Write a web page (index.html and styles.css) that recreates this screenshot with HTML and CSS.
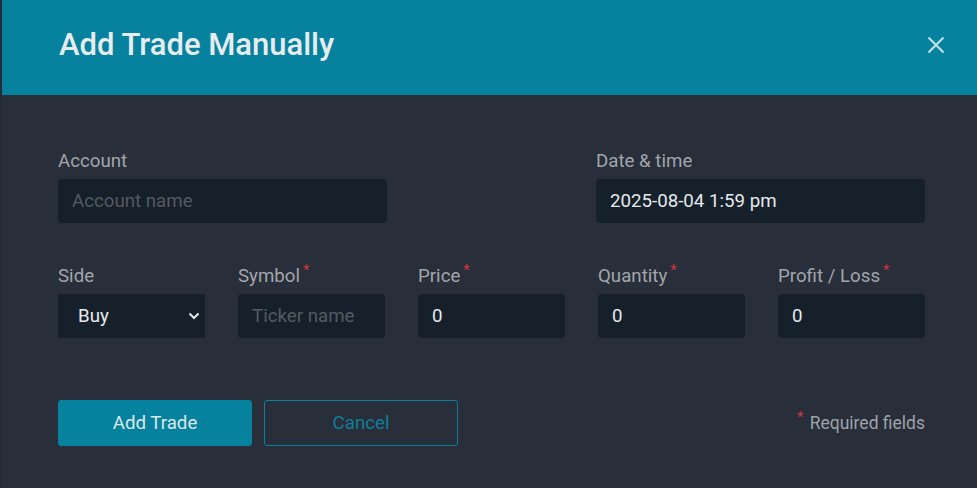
FILE: index.html
```html
<!DOCTYPE html>
<html lang="en">
<head>
<meta charset="utf-8"/>
<meta content="width=device-width, initial-scale=1.0" name="viewport"/>
<title>Add Trade Manually</title>
<link rel="stylesheet" href="styles.css">
</head>
<body>
<div class="modal">
  <div class="modal-header">
    <h2>Add Trade Manually</h2>
    <button class="close-btn" aria-label="Close">
      <svg width="18" height="18" viewBox="0 0 18 18"><path d="M1.5 1.5 L16.5 16.5 M16.5 1.5 L1.5 16.5" stroke="currentColor" stroke-width="2.2" fill="none"/></svg>
    </button>
  </div>
  <div class="modal-body">
    <div class="row row-top">
      <div class="field wide">
        <label>Account</label>
        <input type="text" placeholder="Account name"/>
      </div>
      <div class="field wide">
        <label>Date &amp; time</label>
        <input type="text" value="2025-08-04 1:59 pm"/>
      </div>
    </div>
    <div class="row row-five">
      <div class="field">
        <label>Side</label>
        <div class="select">
          <span>Buy</span>
          <svg width="12" height="8" viewBox="0 0 12 8"><path d="M1.5 1.5 L6 6 L10.5 1.5" stroke="currentColor" stroke-width="2" fill="none"/></svg>
        </div>
      </div>
      <div class="field">
        <label>Symbol<sup>*</sup></label>
        <input type="text" placeholder="Ticker name"/>
      </div>
      <div class="field">
        <label>Price<sup>*</sup></label>
        <input type="text" value="0"/>
      </div>
      <div class="field">
        <label>Quantity<sup>*</sup></label>
        <input type="text" value="0"/>
      </div>
      <div class="field">
        <label>Profit / Loss<sup>*</sup></label>
        <input type="text" value="0"/>
      </div>
    </div>
    <div class="actions">
      <button class="btn btn-primary">Add Trade</button>
      <button class="btn btn-outline">Cancel</button>
      <span class="required-note"><sup>*</sup> Required fields</span>
    </div>
  </div>
</div>
</body>
</html>
```

FILE: styles.css
```css
body {
  margin: 0;
  background: #282e3a;
  font-family: Roboto, "Liberation Sans", Arial, sans-serif;
  color: #e8eaed;
}
.modal {
  border-left: 2px solid #262c37;
  min-height: 488px;
  box-sizing: border-box;
}
.modal-header {
  background: #06829f;
  height: 95px;
  box-sizing: border-box;
  display: flex;
  align-items: center;
  justify-content: space-between;
  padding: 0 32px 6px 57px;
}
.modal-header h2 {
  margin: 0;
  font-size: 31px;
  font-weight: 500;
  color: #e9ecee;
}
.close-btn {
  background: none;
  border: none;
  padding: 0;
  color: #bfe0e9;
  display: flex;
  cursor: pointer;
}
.modal-body {
  padding: 55px 52px 40px 56px;
}
.row {
  display: flex;
  justify-content: space-between;
}
.row-five {
  margin-top: 42px;
}
.field {
  width: 147px;
  display: flex;
  flex-direction: column;
}
.field.wide {
  width: 329px;
}
label {
  font-size: 18.7px;
  line-height: 22px;
  color: #a2a5ab;
  margin-bottom: 7px;
  white-space: nowrap;
}
sup {
  color: #d0363b;
  font-size: 15px;
  line-height: 0;
  margin-left: 3px;
  vertical-align: 7px;
}
input {
  height: 44px;
  box-sizing: border-box;
  background: #16202a;
  border: none;
  border-radius: 4px;
  padding: 0 14px;
  font-family: inherit;
  font-size: 18.7px;
  color: #e6e9ec;
  outline: none;
  width: 100%;
}
input::placeholder {
  color: #535a63;
}
.select {
  height: 44px;
  background: #16202a;
  display: flex;
  align-items: center;
  justify-content: space-between;
  padding: 0 5px 0 20px;
  font-size: 18.7px;
  color: #e8eaed;
}
.select svg {
  color: #e6e9ec;
}
.actions {
  display: flex;
  align-items: center;
  gap: 12px;
  margin-top: 62px;
}
.btn {
  width: 194px;
  height: 46px;
  border-radius: 3px;
  font-family: inherit;
  font-size: 18.7px;
  cursor: pointer;
}
.btn-primary {
  background: #06829f;
  border: 1px solid #06829f;
  color: #dde7ea;
}
.btn-outline {
  background: transparent;
  border: 1px solid #0b7f9b;
  color: #0e7e98;
}
.required-note {
  margin-left: auto;
  font-size: 17.5px;
  color: #9ea2a9;
}
.required-note sup {
  margin: 0 2px 0 0;
}
```
